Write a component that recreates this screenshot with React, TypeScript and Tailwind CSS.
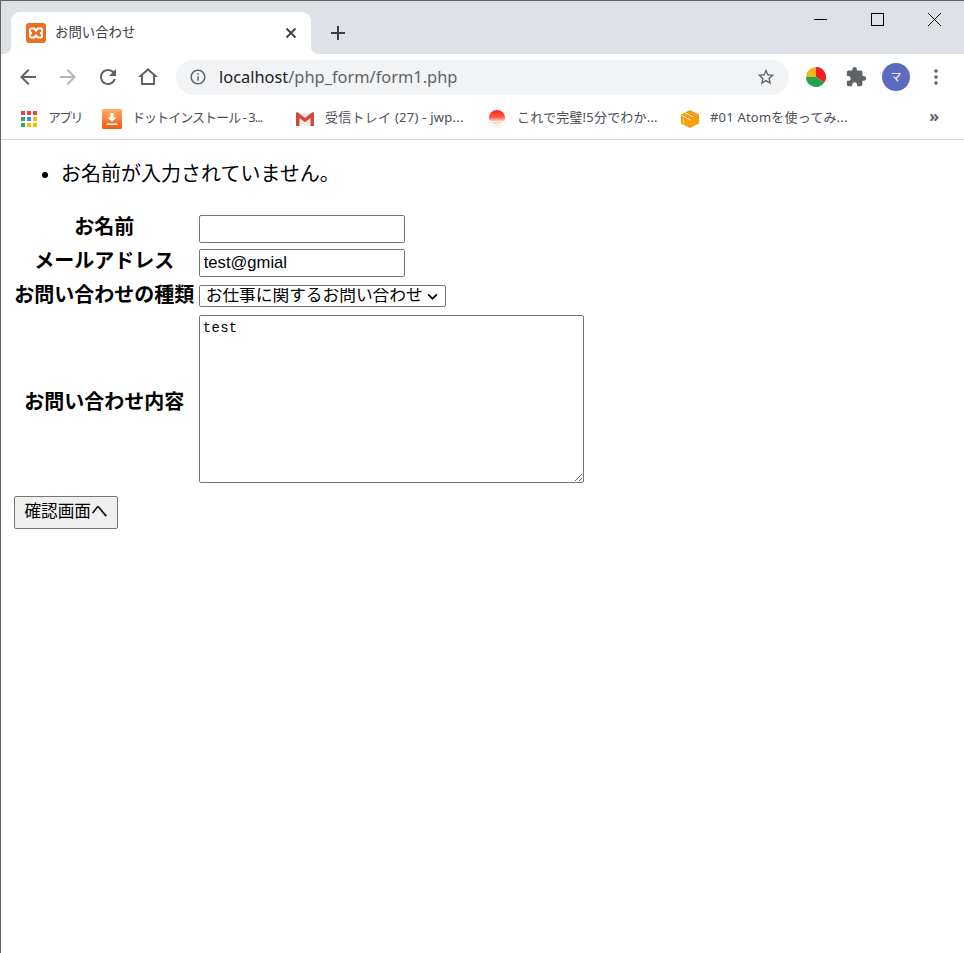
const uiFont = 'font-["Noto_Sans","Noto_Sans_CJK_JP",sans-serif]';

function Mat({ d, className, fill = '#5f6368' }: { d: string; className?: string; fill?: string }) {
  return (
    <svg viewBox="0 0 24 24" className={className} fill={fill}>
      <path d={d} />
    </svg>
  );
}

const BACK = 'M20 11H7.83l5.59-5.59L12 4l-8 8 8 8 1.41-1.41L7.83 13H20v-2z';
const FORWARD = 'M4 11h12.17l-5.59-5.59L12 4l8 8-8 8-1.41-1.41L16.17 13H4v-2z';
const RELOAD =
  'M17.65 6.35C16.2 4.9 14.21 4 12 4c-4.42 0-7.99 3.58-7.99 8s3.57 8 7.99 8c3.73 0 6.84-2.55 7.73-6h-2.08c-.82 2.33-3.04 4-5.65 4-3.31 0-6-2.69-6-6s2.69-6 6-6c1.66 0 3.14.69 4.22 1.78L13 11h7V4l-2.35 2.35z';
const HOME = 'M12 3L2 12h3v8h14v-8h3L12 3zm5 15H7v-7.81l5-4.5 5 4.5V18z';
const INFO =
  'M11 7h2v2h-2zm0 4h2v6h-2zm1-9C6.48 2 2 6.48 2 12s4.48 10 10 10 10-4.48 10-10S17.52 2 12 2zm0 18c-4.41 0-8-3.59-8-8s3.59-8 8-8 8 3.59 8 8-3.59 8-8 8z';
const STAR =
  'M22 9.24l-7.19-.62L12 2 9.19 8.63 2 9.24l5.46 4.73L5.82 21 12 17.27 18.18 21l-1.63-7.03L22 9.24zM12 15.4l-3.76 2.27 1-4.28-3.32-2.88 4.38-.38L12 6.1l1.71 4.04 4.38.38-3.32 2.88 1 4.28L12 15.4z';
const PUZZLE =
  'M20.5 11H19V7c0-1.1-.9-2-2-2h-4V3.5C13 2.12 11.88 1 10.5 1S8 2.12 8 3.5V5H4c-1.1 0-1.99.9-1.99 2v3.8H3.5c1.49 0 2.7 1.21 2.7 2.7s-1.21 2.7-2.7 2.7H2V20c0 1.1.9 2 2 2h3.8v-1.5c0-1.49 1.21-2.7 2.7-2.7 1.49 0 2.7 1.21 2.7 2.7V22H17c1.1 0 2-.9 2-2v-4h1.5c1.38 0 2.5-1.12 2.5-2.5S21.88 11 20.5 11z';

function XamppIcon() {
  return (
    <svg viewBox="0 0 20 20" className="w-[20px] h-[20px]">
      <rect width="20" height="20" rx="3" fill="#e8701f" />
      <path
        d="M5 5.500h3.200L10 7.500l1.800-2H15c.8 0 1 .6 1 1.200v2c0 .5-.6 1-1.800 1.300 1.200.3 1.800.8 1.800 1.300v2c0 .6-.2 1.200-1 1.200h-3.200L10 12.500l-1.800 2H5c-.8 0-1-.6-1-1.200v-2c0-.5.6-1 1.800-1.300C4.600 9.700 4 9.200 4 8.700v-2c0-.6.2-1.200 1-1.200z"
        fill="#e8701f"
        stroke="#fff"
        strokeWidth="2"
      />
    </svg>
  );
}

function AppsIcon() {
  const colors = ['#ea4335', '#ea4335', '#ea4335', '#34a853', '#4285f4', '#fbbc05', '#34a853', '#fbbc05', '#fbbc05'];
  return (
    <div className="grid grid-cols-3 gap-[2px] w-[16px] h-[16px]">
      {colors.map((c, i) => (
        <span key={i} className="w-[4px] h-[4px]" style={{ backgroundColor: c }} />
      ))}
    </div>
  );
}

function DownloadIcon() {
  return (
    <svg viewBox="0 0 20 20" className="w-[20px] h-[20px]">
      <defs>
        <linearGradient id="dl" x1="0" y1="0" x2="0" y2="1">
          <stop offset="0" stopColor="#ffb066" />
          <stop offset="1" stopColor="#f9570c" />
        </linearGradient>
      </defs>
      <rect width="20" height="20" rx="1.500" fill="url(#dl)" />
      <path d="M8.300 4h3.400v4.500h2.800L10 12.800 5.500 8.500h2.800zM4.500 14.500h11v1.500h-11z" fill="#fff" />
    </svg>
  );
}

function GmailIcon() {
  return (
    <svg viewBox="0 0 18 14" className="w-[18px] h-[14px]">
      <path d="M1 1h16v13H1z" fill="#ececec" />
      <path d="M0 1.500C0 .5 1.200-.2 2 .5L9 6l7-5.500c.8-.7 2-.0 2 1V14h-3.500V6L9 10.200 3.500 6v8H0z" fill="#d1483a" />
    </svg>
  );
}

function SunIcon() {
  return (
    <svg viewBox="0 0 20 20" className="w-[20px] h-[20px]">
      <defs>
        <linearGradient id="sun" x1="0" y1="0" x2="0" y2="1">
          <stop offset="0" stopColor="#f5222a" />
          <stop offset=".65" stopColor="#ff5a3c" />
          <stop offset="1" stopColor="#ffd3c6" />
        </linearGradient>
      </defs>
      <circle cx="10" cy="10" r="9.500" fill="#fff5f3" />
      <path d="M2 9a8 8 0 0 1 16 0c0 1.500-.6 2.400-1.500 3h-13C2.600 11.400 2 10.500 2 9z" fill="url(#sun)" />
      <path d="M5 13.500h10l-1.500 1.200h-7z" fill="#ffc4b4" />
      <path d="M7.500 16h5l-1 .8h-3z" fill="#ffe0d8" />
    </svg>
  );
}

function BoxIcon() {
  return (
    <svg viewBox="0 0 20 20" className="w-[20px] h-[20px]">
      <path d="M10 1l9 4.500v9L10 19l-9-4.500v-9z" fill="#f99d0c" />
      <path d="M1.500 6.500l9 4.500M5.500 4l8 4" stroke="#fff" strokeWidth="1" fill="none" opacity=".85" />
      <path d="M3 12.500h1.500v1H3zM3 10.500h1v1H3z" fill="#fff" />
    </svg>
  );
}

function PieIcon() {
  return (
    <svg viewBox="0 0 20 20" className="w-[20px] h-[20px]">
      <path d="M10 10V0a10 10 0 0 1 8.300 15.600z" fill="#ee1f25" />
      <path d="M10 10l8.300 5.600A10 10 0 0 1 0 10z" fill="#22a44a" />
      <path d="M10 10H0A10 10 0 0 1 10 0z" fill="#f6b221" />
    </svg>
  );
}

function Bookmark({
  icon,
  label,
  className,
  textClass,
}: {
  icon: React.ReactNode;
  label: string;
  className: string;
  textClass: string;
}) {
  return (
    <div className={`flex items-center ${className}`}>
      {icon}
      <span className={`mb-[2px] text-[13px] text-[#4b4e53] whitespace-nowrap ${textClass}`}>{label}</span>
    </div>
  );
}

export default function App() {
  return (
    <div className="h-[953px] w-[964px] overflow-hidden bg-white border-l border-t border-[#5e6466] flex flex-col text-black">
      {/* Tab strip */}
      <div className={`h-[53px] shrink-0 bg-[#dee1e6] flex items-end pl-[10px] relative ${uiFont}`}>
        <div className="relative w-[300px] h-[42px] bg-white rounded-t-[9px] flex items-center pl-[15px] pr-[14px]">
          <svg viewBox="0 0 8 8" className="absolute left-[-8px] bottom-0 w-[8px] h-[8px]">
            <path d="M8 0v8H0c5 0 8-3 8-8z" fill="#fff" />
          </svg>
          <svg viewBox="0 0 8 8" className="absolute right-[-8px] bottom-0 w-[8px] h-[8px]">
            <path d="M0 0v8H8C3 8 0 5 0 0z" fill="#fff" />
          </svg>
          <XamppIcon />
          <span className="ml-[9px] text-[13.4px] text-[#3c4043] leading-none">お問い合わせ</span>
          <svg viewBox="0 0 12 12" className="ml-auto w-[12px] h-[12px]" stroke="#3c4043" strokeWidth="1.800">
            <path d="M1.500 1.500l9 9M10.500 1.500l-9 9" />
          </svg>
        </div>
        <svg viewBox="0 0 16 16" className="ml-[19px] mb-[13px] w-[16px] h-[16px]" stroke="#3c4043" strokeWidth="2">
          <path d="M8 1v14M1 8h14" />
        </svg>
        {/* Window controls */}
        <div className="absolute top-[12px] right-[23px] flex items-center gap-[44px]">
          <svg viewBox="0 0 13 13" className="w-[13px] h-[13px]" stroke="#000" strokeWidth="1">
            <path d="M0 6.500h13" />
          </svg>
          <svg viewBox="0 0 13 13" className="w-[13px] h-[13px]" stroke="#000" strokeWidth="1" fill="none">
            <rect x=".5" y=".5" width="12" height="12" />
          </svg>
          <svg viewBox="0 0 13 13" className="w-[13px] h-[13px]" stroke="#000" strokeWidth="1">
            <path d="M0 0l13 13M13 0L0 13" />
          </svg>
        </div>
      </div>

      {/* Toolbar */}
      <div className={`h-[46px] shrink-0 bg-white flex items-center pl-[15px] ${uiFont}`}>
        <div className="flex items-center gap-[16px]">
          <Mat d={BACK} className="w-[24px] h-[24px]" />
          <Mat d={FORWARD} className="w-[24px] h-[24px]" fill="#b3b6ba" />
          <Mat d={RELOAD} className="w-[24px] h-[24px]" />
          <Mat d={HOME} className="w-[24px] h-[24px]" />
        </div>
        <div className="ml-[16px] w-[613px] h-[35px] rounded-full bg-[#f1f3f4] flex items-center pl-[13px] pr-[13px]">
          <Mat d={INFO} className="w-[18px] h-[18px]" />
          <span className="ml-[12px] text-[16.4px] text-[#5f6368] leading-none">
            <span className="text-[#202124]">localhost</span>/php_form/form1.php
          </span>
          <Mat d={STAR} className="ml-auto w-[20px] h-[20px]" />
        </div>
        <div className="ml-[17px]">
          <PieIcon />
        </div>
        <Mat d={PUZZLE} className="ml-[19px] w-[22px] h-[22px]" />
        <div className="ml-[15px] w-[28px] h-[28px] rounded-full bg-[#5c6bc0] text-white text-[11px] flex items-center justify-center">
          マ
        </div>
        <svg viewBox="0 0 4 16" className="ml-[24px] w-[4px] h-[16px]" fill="#5f6368">
          <circle cx="2" cy="2" r="1.800" />
          <circle cx="2" cy="8" r="1.800" />
          <circle cx="2" cy="14" r="1.800" />
        </svg>
      </div>

      {/* Bookmarks bar */}
      <div className={`h-[40px] shrink-0 bg-white border-b border-[#d3d5d8] flex items-center relative pl-[20px] pb-[2px] ${uiFont}`}>
        <Bookmark icon={<AppsIcon />} label="アプリ" className="gap-[11px] w-[81px]" textClass="tracking-[-1.7px]" />
        <Bookmark icon={<DownloadIcon />} label="ドットインストール - 3..." className="gap-[10px] w-[194px]" textClass="tracking-[-0.95px]" />
        <Bookmark icon={<GmailIcon />} label="受信トレイ (27) - jwp..." className="gap-[11px] w-[191px]" textClass="tracking-[0.25px]" />
        <Bookmark icon={<SunIcon />} label="これで完璧!5分でわか..." className="gap-[10px] w-[193px]" textClass="tracking-[0.2px]" />
        <Bookmark icon={<BoxIcon />} label="#01 Atomを使ってみ..." className="gap-[10px] w-[200px]" textClass="tracking-[0.2px]" />
        <span className="absolute right-[25px] top-[8px] text-[16px] leading-none text-[#5f6368] font-bold">»</span>
      </div>

      {/* Page */}
      <div className='flex-1 pl-[10px] font-["Liberation_Sans","Noto_Sans_CJK_JP",sans-serif] text-[20px]'>
        <ul className="list-disc pl-[50px] mt-[20px] mb-[23px]">
          <li className="leading-[29px]">お名前が入力されていません。</li>
        </ul>
        <form>
          <table className="border-separate border-spacing-[2.5px]">
            <tbody>
              <tr>
                <th className="px-[1.25px] pb-[5px] leading-[24px] font-bold">お名前</th>
                <td className="px-[1.25px] pt-[1.25px] pb-[2.25px]">
                  <input
                    type="text"
                    className="block w-[206px] h-[28px] border border-[#767676] rounded-[2px] px-[4px] text-[16.6px] bg-white"
                  />
                </td>
              </tr>
              <tr>
                <th className="px-[1.25px] pb-[5px] leading-[24px] font-bold">メールアドレス</th>
                <td className="px-[1.25px] pt-[1.25px] pb-[2.25px]">
                  <input
                    type="text"
                    defaultValue="test@gmial"
                    className="block w-[206px] h-[28px] border border-[#767676] rounded-[2px] px-[4px] text-[16.6px] bg-white"
                  />
                </td>
              </tr>
              <tr>
                <th className="px-[1.25px] pb-[3px] leading-[24px] font-bold">お問い合わせの種類</th>
                <td className="px-[1.25px] pt-[4.25px] pb-[4.25px]">
                  <div className="relative w-[247px] h-[22px]">
                    <select className="block appearance-none w-[247px] h-[22px] border border-[#767676] rounded-[2px] pl-[6px] text-[16.7px] leading-none bg-white">
                      <option>お仕事に関するお問い合わせ</option>
                    </select>
                    <svg
                      viewBox="0 0 12 8"
                      className="absolute right-[8px] top-[8px] w-[11px] h-[7px] pointer-events-none"
                      fill="none"
                      stroke="#000"
                      strokeWidth="2"
                    >
                      <path d="M1 1.500l5 5 5-5" />
                    </svg>
                  </div>
                </td>
              </tr>
              <tr>
                <th className="px-[1.25px] pt-[6px] leading-[24px] font-bold">お問い合わせ内容</th>
                <td className="p-[1.25px]">
                  <textarea
                    defaultValue="test"
                    className='block resize w-[385px] h-[168px] border border-[#767676] rounded-[2px] px-[3px] pt-[4px] font-["Liberation_Mono","Noto_Sans_CJK_JP",monospace] text-[14px] tracking-[0.3px] leading-[17px] bg-white'
                  />
                </td>
              </tr>
            </tbody>
          </table>
          <button
            type="button"
            className="mt-[10px] ml-[3px] w-[104px] h-[33px] border border-[#767676] rounded-[2px] bg-[#efefef] text-[16.6px] leading-none"
          >
            確認画面へ
          </button>
        </form>
      </div>
    </div>
  );
}
